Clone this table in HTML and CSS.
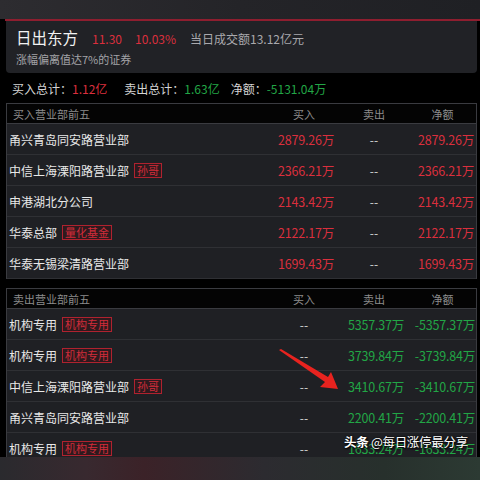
FILE: index.html
```html
<!DOCTYPE html>
<html lang="zh">
<head>
<meta charset="utf-8">
<link rel="stylesheet" href="styles.css">
</head>
<body>
<div class="page">
  <div class="screen">
    <div class="topstrip"></div>
    <div class="redline"></div>
    <div class="content">
      <div class="card">
        <div class="title-row">
          <span class="title">日出东方</span>
          <span class="red price">11.30</span>
          <span class="red pct">10.03%</span>
          <span class="muted turnover">当日成交额13.12亿元</span>
        </div>
        <div class="subtitle">涨幅偏离值达7%的证券</div>
      </div>
      <div class="summary">
        <span class="label">买入总计：</span><span class="red s-val s1">1.12亿</span>
        <span class="label">卖出总计：</span><span class="green s-val s2">1.63亿</span>
        <span class="label">净额：</span><span class="green s-val">-5131.04万</span>
      </div>

      <div class="table">
        <div class="row head">
          <div class="name">买入营业部前五</div>
          <div class="col c">买入</div>
          <div class="col c">卖出</div>
          <div class="col c">净额</div>
        </div>
        <div class="row">
          <div class="name">甬兴青岛同安路营业部</div>
          <div class="col r red">2879.26万</div>
          <div class="col c dash">--</div>
          <div class="col r red">2879.26万</div>
        </div>
        <div class="row">
          <div class="name">中信上海溧阳路营业部<span class="badge">孙哥</span></div>
          <div class="col r red">2366.21万</div>
          <div class="col c dash">--</div>
          <div class="col r red">2366.21万</div>
        </div>
        <div class="row">
          <div class="name">申港湖北分公司</div>
          <div class="col r red">2143.42万</div>
          <div class="col c dash">--</div>
          <div class="col r red">2143.42万</div>
        </div>
        <div class="row">
          <div class="name">华泰总部<span class="badge">量化基金</span></div>
          <div class="col r red">2122.17万</div>
          <div class="col c dash">--</div>
          <div class="col r red">2122.17万</div>
        </div>
        <div class="row">
          <div class="name">华泰无锡梁清路营业部</div>
          <div class="col r red">1699.43万</div>
          <div class="col c dash">--</div>
          <div class="col r red">1699.43万</div>
        </div>
      </div>

      <div class="table sell">
        <div class="row head">
          <div class="name">卖出营业部前五</div>
          <div class="col c">买入</div>
          <div class="col c">卖出</div>
          <div class="col c">净额</div>
        </div>
        <div class="row">
          <div class="name">机构专用<span class="badge">机构专用</span></div>
          <div class="col c dash">--</div>
          <div class="col r green">5357.37万</div>
          <div class="col r green">-5357.37万</div>
        </div>
        <div class="row">
          <div class="name">机构专用<span class="badge">机构专用</span></div>
          <div class="col c dash">--</div>
          <div class="col r green">3739.84万</div>
          <div class="col r green">-3739.84万</div>
        </div>
        <div class="row">
          <div class="name">中信上海溧阳路营业部<span class="badge">孙哥</span></div>
          <div class="col c dash">--</div>
          <div class="col r green">3410.67万</div>
          <div class="col r green">-3410.67万</div>
        </div>
        <div class="row">
          <div class="name">甬兴青岛同安路营业部</div>
          <div class="col c dash">--</div>
          <div class="col r green">2200.41万</div>
          <div class="col r green">-2200.41万</div>
        </div>
        <div class="row">
          <div class="name">机构专用<span class="badge">机构专用</span></div>
          <div class="col c dash">--</div>
          <div class="col r green">1633.24万</div>
          <div class="col r green">-1633.24万</div>
        </div>
      </div>
    </div>
  </div>

  <svg class="arrow" width="70" height="50" viewBox="0 0 70 50">
    <polygon points="1,1 3,0 50,28 53,23 60,40 42,38 47,33" fill="#e8231f"/>
  </svg>

  <div class="watermark"><b>头条</b> @每日涨停最分享</div>
</div>
</body>
</html>
```

FILE: styles.css
```css
* { box-sizing: border-box; }
html, body {
  margin: 0;
  padding: 0;
}
body {
  width: 480px;
  height: 480px;
  overflow: hidden;
  font-family: "Noto Sans CJK SC", "Noto Sans", sans-serif;
  background: linear-gradient(90deg, #2a2a2e 0%, #38292f 18%, #3b2228 30%, #2c2b30 55%, #27302c 80%, #2c3a33 100%);
}
.page {
  position: relative;
  width: 480px;
  height: 480px;
}
.screen {
  height: 457px;
  overflow: hidden;
  background: #000;
}
.topstrip {
  height: 19px;
  background: linear-gradient(90deg, #2d2c30 0%, #242428 50%, #1f2024 100%);
}
.redline {
  height: 2px;
  margin-left: 5px;
  background: #8e1e2f;
}
.content {
  padding: 0 3px 0 6px;
}
.card {
  height: 52px;
  background: #212226;
  border-radius: 0 0 4px 4px;
  padding: 5px 10px 0 10px;
}
.title-row {
  display: flex;
  align-items: baseline;
  height: 26px;
}
.title {
  font-size: 15.5px;
  color: #f2f2f2;
  margin-right: 14px;
}
.price, .pct, .turnover {
  font-size: 12px;
}
.price { margin-right: 13px; }
.pct { margin-right: 14px; }
.muted { color: #a9a9ad; }
.subtitle {
  font-size: 11px;
  color: #a4a4a8;
  line-height: 14px;
}
.red { color: #db2f3d; }
.green { color: #22a646; }
.summary {
  height: 30px;
  display: flex;
  align-items: center;
  padding-left: 6px;
  font-size: 12px;
}
.summary .label { color: #d4d4d4; }
.s1 { margin-right: 17px; }
.s2 { margin-right: 11px; }

.table {
  border: 1px solid #3a3b40;
  border-bottom: none;
  background: #1f2024;
}
.table.sell {
  margin-top: 9px;
}
.row {
  display: grid;
  grid-template-columns: 1fr 70px 70px 67px;
  align-items: center;
  height: 31px;
  border-bottom: 1px solid #2f3034;
  font-size: 12px;
  color: #e8e8e8;
}
.row.head {
  height: 20px;
  background: #040404;
  border-bottom: 1px solid #3a3b40;
  color: #8c8c8c;
  font-size: 11px;
}
.row.head .name { padding-left: 6px; }
.name {
  padding-left: 2px;
  display: flex;
  align-items: center;
  white-space: nowrap;
}
.col { white-space: nowrap; }
.col.c { text-align: center; }
.col.r { text-align: right; padding-right: 5px; font-size: 12.5px; letter-spacing: -0.2px; }
.row .col.r:nth-child(4) { padding-right: 2px; }
.sell .row .col.r:nth-child(4) { padding-right: 1px; }
.dash { color: #d8d8d8; }
.badge {
  margin-left: 5px;
  border: 1px solid #b0222f;
  background: #2e1a1e;
  color: #d22c3a;
  font-size: 11px;
  line-height: 13px;
  padding: 0 2px;
}
.arrow {
  position: absolute;
  left: 278px;
  top: 349px;
}
.watermark {
  position: absolute;
  left: 344px;
  top: 432px;
  font-size: 12.5px;
  letter-spacing: -0.3px;
  color: #ffffff;
  text-shadow: 0 0 2px #000, 1px 1px 2px #000;
  white-space: nowrap;
}
.watermark b { font-weight: 700; }
```
